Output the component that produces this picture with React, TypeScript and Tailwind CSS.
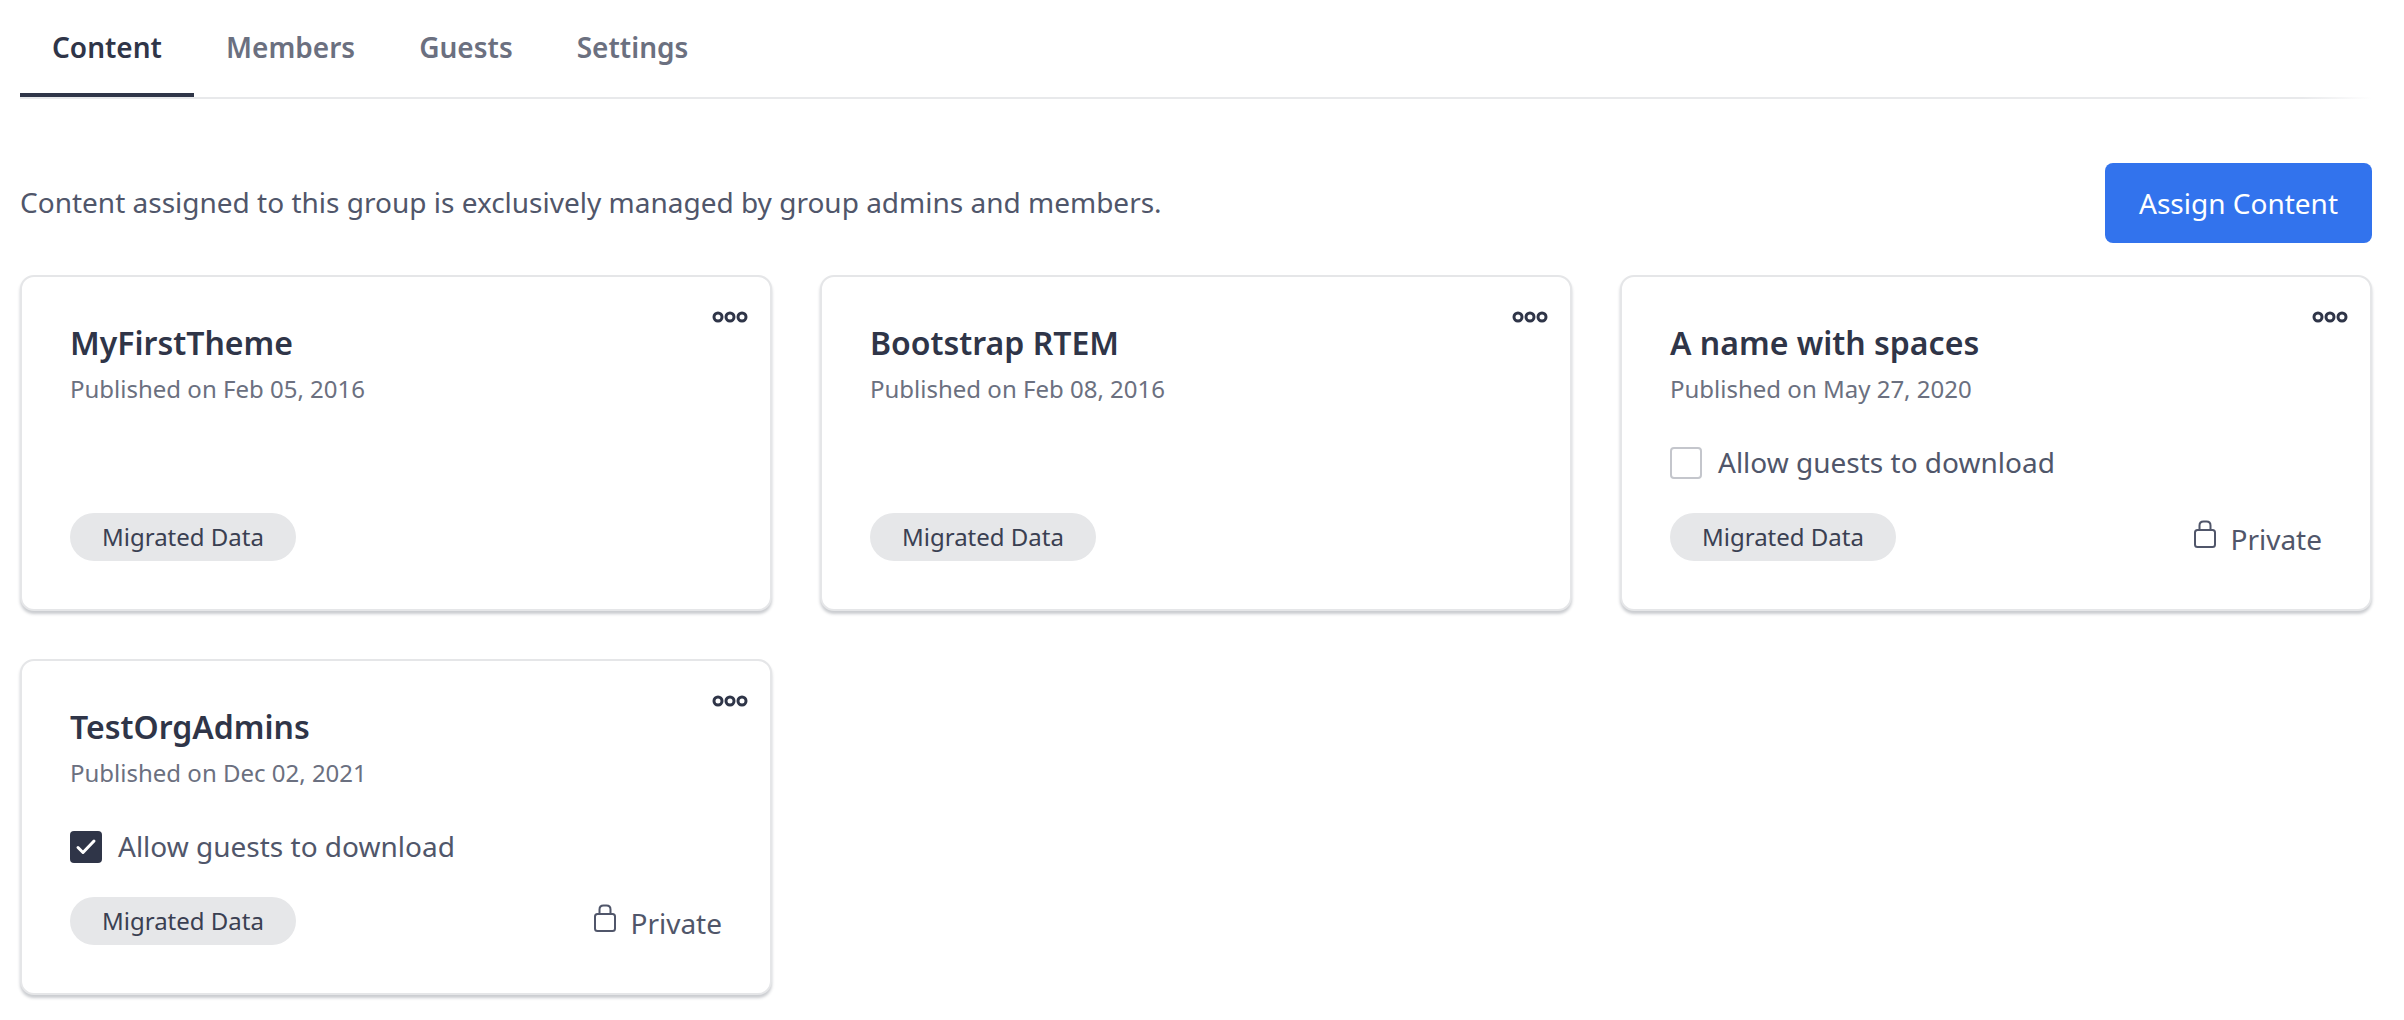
type Item = {
  title: string
  date: string
  guests?: 'on' | 'off'
  isPrivate?: boolean
}

const items: Item[] = [
  { title: 'MyFirstTheme', date: 'Published on Feb 05, 2016' },
  { title: 'Bootstrap RTEM', date: 'Published on Feb 08, 2016' },
  { title: 'A name with spaces', date: 'Published on May 27, 2020', guests: 'off', isPrivate: true },
  { title: 'TestOrgAdmins', date: 'Published on Dec 02, 2021', guests: 'on', isPrivate: true },
]

function Dots() {
  return (
    <svg width="36" height="14" viewBox="0 0 36 14" fill="none" stroke="#2f3548" strokeWidth="3" className="absolute top-[33px] right-[22px]">
      <circle cx="6" cy="7" r="4" />
      <circle cx="18" cy="7" r="4" />
      <circle cx="30" cy="7" r="4" />
    </svg>
  )
}

function LockIcon() {
  return (
    <svg width="24" height="28" viewBox="0 0 24 28" fill="none" stroke="currentColor" strokeWidth="2" className="-mt-[10px]">
      <rect x="2" y="10" width="20" height="17" rx="2.5" />
      <path d="M6.5 10V5.5C6.5 3 8 1.5 10.5 1.5h3c2.5 0 4 1.5 4 4V10" />
    </svg>
  )
}

function ContentCard({ item }: { item: Item }) {
  return (
    <div className="relative flex h-[336px] flex-col rounded-[14px] border-2 border-[#e5e6e8] bg-white px-[48px] pt-[44px] pb-[48px] shadow-[0_3px_3px_rgba(45,51,69,0.25)]">
      <Dots />
      <h3 className="text-[32px] leading-[44px] font-semibold text-[#2f3548]">{item.title}</h3>
      <p className="mt-[6px] text-[24px] leading-[36px] text-[#6b7080]">{item.date}</p>
      {item.guests && (
        <label className="mt-[38px] flex h-[36px] items-center gap-[16px] text-[28px] text-[#50566a]">
          {item.guests === 'on' ? (
            <span className="flex h-[32px] w-[32px] items-center justify-center rounded-[4px] bg-[#2f3548]">
              <svg width="32" height="32" viewBox="0 0 32 32" fill="none" stroke="white" strokeWidth="3" strokeLinecap="round" strokeLinejoin="round">
                <path d="M8 16.5l5 5L24 10" />
              </svg>
            </span>
          ) : (
            <span className="h-[32px] w-[32px] rounded-[4px] border-2 border-[#c4c6cc] bg-white" />
          )}
          <span className="-mt-[2px]">Allow guests to download</span>
        </label>
      )}
      <div className="mt-auto flex items-center justify-between">
        <span className="flex h-[48px] items-center rounded-full bg-[#e6e7e9] px-[32px] text-[24px] text-[#3a4052]">Migrated Data</span>
        {item.isPrivate && (
          <span className="mt-[4px] flex items-center gap-[13px] text-[28px] text-[#50566a]">
            <LockIcon />
            Private
          </span>
        )}
      </div>
    </div>
  )
}

export default function App() {
  const tabs = ['Content', 'Members', 'Guests', 'Settings']

  return (
    <div className="min-h-[1020px] bg-white pr-[32px] pl-[20px] font-['Noto_Sans',sans-serif]">
      <div className="flex h-[97px]">
        {tabs.map((tab, i) => (
          <div
            key={tab}
            className={
              i === 0
                ? 'flex h-[97px] items-center border-b-4 border-[#2f3548] px-[32px] text-[28px] font-semibold text-[#2f3548]'
                : 'flex h-[97px] items-center px-[32px] pb-[4px] text-[28px] font-semibold text-[#6b7080]'
            }
          >
            {tab}
          </div>
        ))}
      </div>
      <div className="h-[2px] bg-linear-to-r from-[#e8e9eb] from-[97%] to-white" />

      <div className="mt-[64px] flex h-[80px] items-center justify-between">
        <p className="-mt-[2px] text-[28px] text-[#50566a]">Content assigned to this group is exclusively managed by group admins and members.</p>
        <button className="h-[80px] rounded-[8px] bg-[#3273ed] px-[34px] text-[28px] text-white">Assign Content</button>
      </div>

      <div className="mt-[32px] grid grid-cols-3 gap-[48px]">
        {items.map((item) => (
          <ContentCard key={item.title} item={item} />
        ))}
      </div>
    </div>
  )
}
